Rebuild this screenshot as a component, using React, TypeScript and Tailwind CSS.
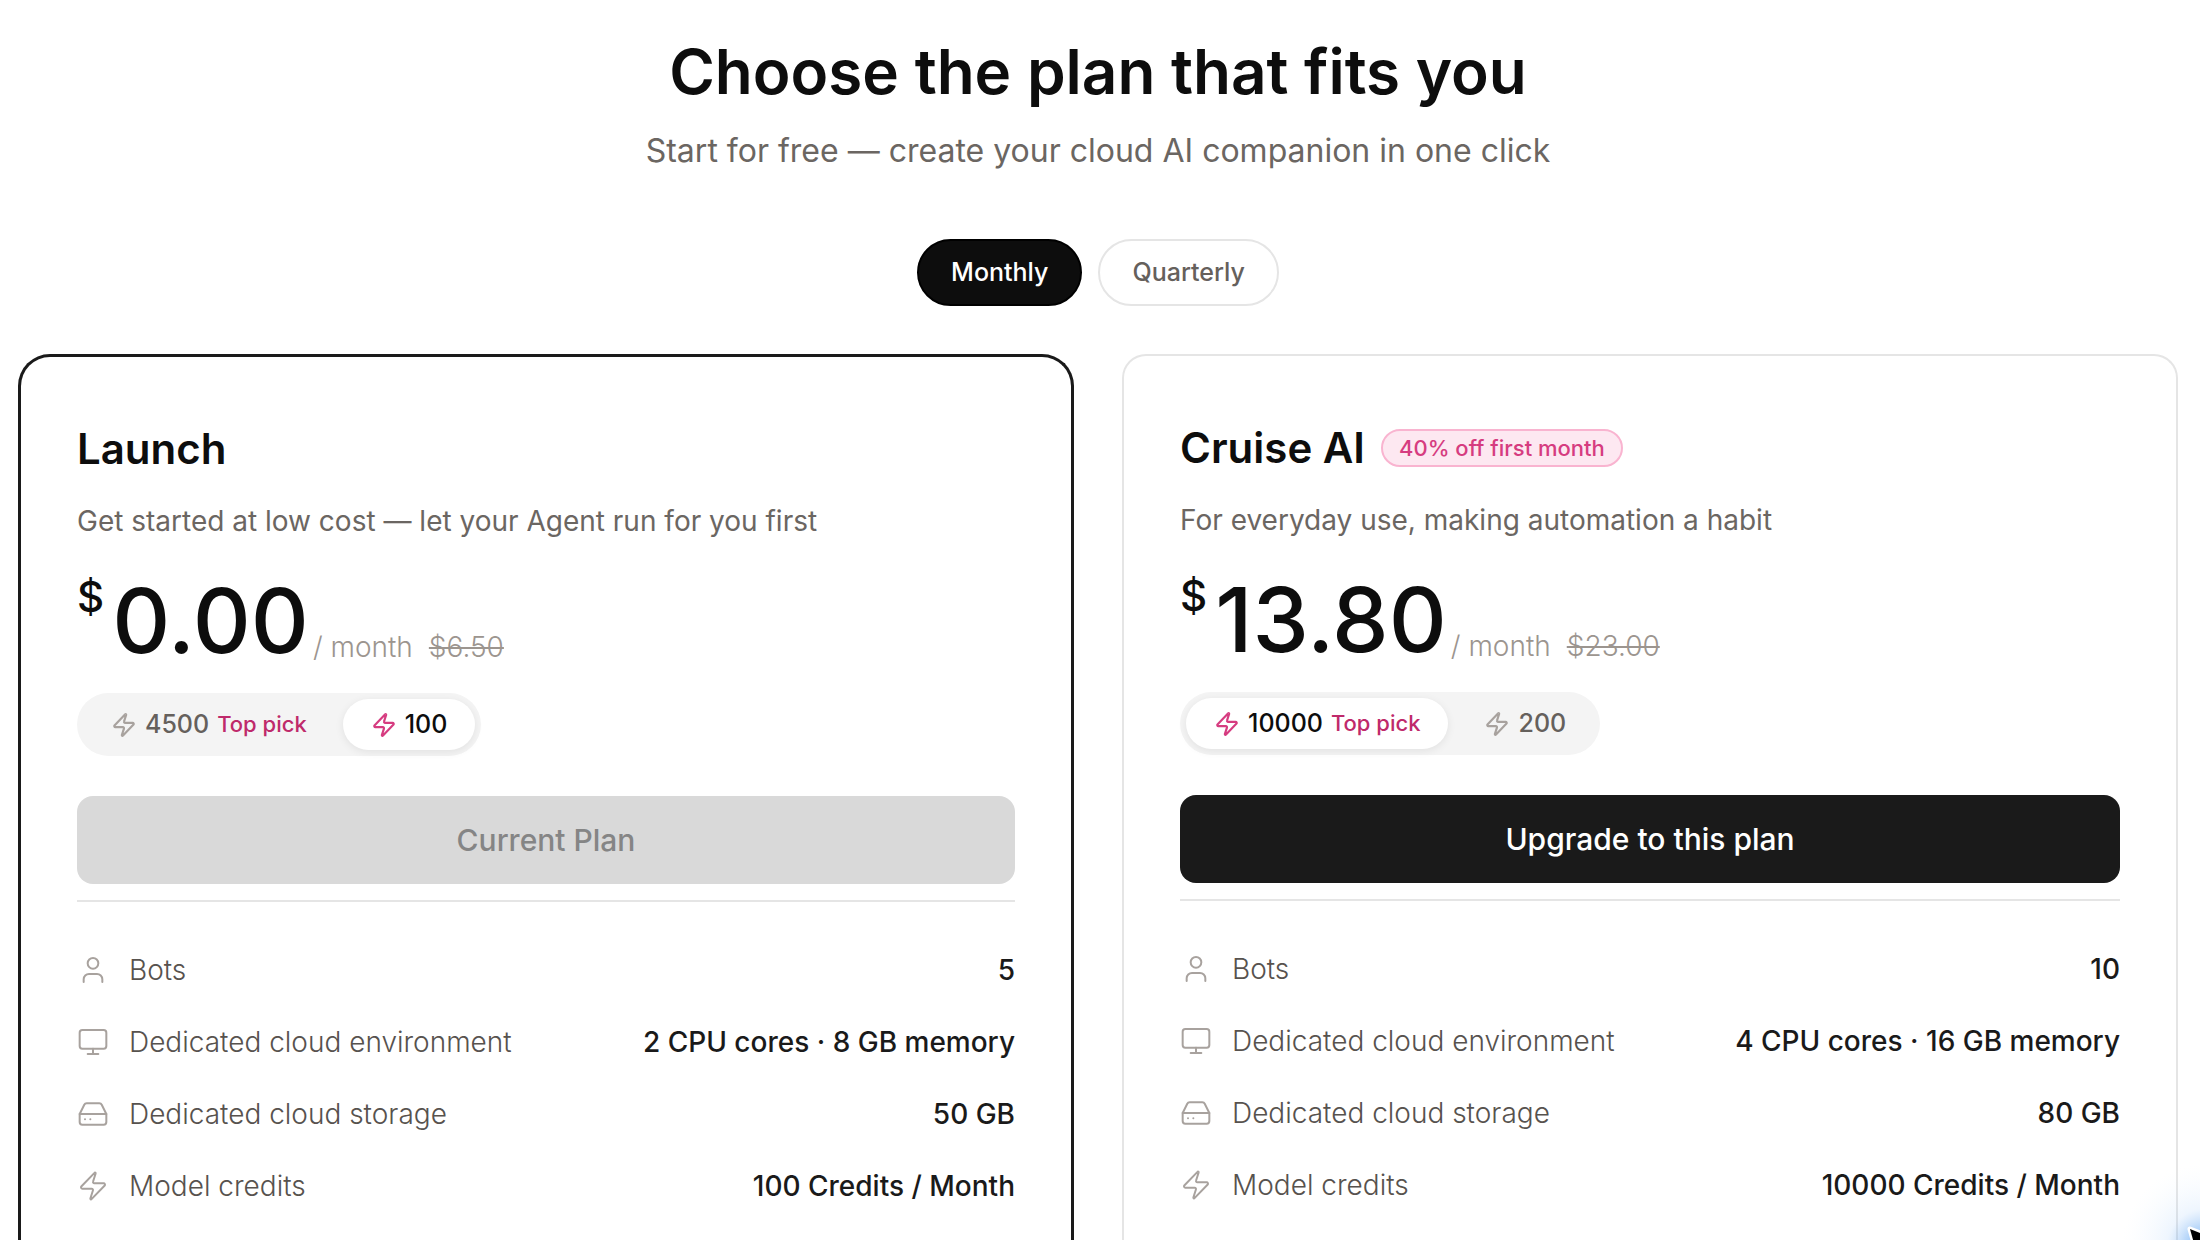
import { HardDrive, Monitor, User, Zap } from 'lucide-react';

const plans = [
  {
    name: 'Launch',
    badge: '',
    description: 'Get started at low cost — let your Agent run for you first',
    price: '0.00',
    oldPrice: '$6.50',
    current: true,
    selected: 1,
    tiers: [
      { credits: '4500', topPick: true },
      { credits: '100', topPick: false },
    ],
    features: ['5', '2 CPU cores · 8 GB memory', '50 GB', '100 Credits / Month'],
  },
  {
    name: 'Cruise AI',
    badge: '40% off first month',
    description: 'For everyday use, making automation a habit',
    price: '13.80',
    oldPrice: '$23.00',
    current: false,
    selected: 0,
    tiers: [
      { credits: '10000', topPick: true },
      { credits: '200', topPick: false },
    ],
    features: ['10', '4 CPU cores · 16 GB memory', '80 GB', '10000 Credits / Month'],
  },
];

const featureRows = [
  { label: 'Bots', icon: User },
  { label: 'Dedicated cloud environment', icon: Monitor },
  { label: 'Dedicated cloud storage', icon: HardDrive },
  { label: 'Model credits', icon: Zap },
];

type Plan = (typeof plans)[number];

const PlanCard = ({ plan }: { plan: Plan }) => (
  <section
    className={
      plan.current
        ? 'rounded-t-[32px] border-3 border-b-0 border-[#1a1a1a] bg-white px-14 pt-16'
        : 'rounded-t-3xl border-2 border-b-0 border-[#e5e5e5] bg-white px-14 pt-16'
    }
  >
    <div className="flex h-14 items-center gap-4">
      <h2 className="text-[42px] leading-14 font-semibold">{plan.name}</h2>
      {plan.badge && (
        <span className="flex h-[38px] items-center rounded-full border-2 border-[#f9b4d0] bg-[#fde8f1] px-4 text-[22px] font-medium text-[#d63c80]">
          {plan.badge}
        </span>
      )}
    </div>
    <p className="mt-6 text-[28px] leading-10 text-[#6b6662]">{plan.description}</p>

    <div className="mt-8 flex h-[96px] items-end">
      <span className="self-start text-[42px] leading-12 font-medium">$</span>
      <span className="ml-2 text-[90px] leading-[96px] font-medium">{plan.price}</span>
      <span className="ml-1 text-[28px] leading-11 font-light text-[#9c958f]">/ month</span>
      <s className="ml-4 text-[28px] leading-11 font-light text-[#9c958f]">{plan.oldPrice}</s>
    </div>

    <div className="mt-6 flex h-[63px] w-fit gap-2 rounded-full bg-[#f4f4f4] p-1.5">
      {plan.tiers.map((tier, index) => (
        <button
          key={tier.credits}
          type="button"
          aria-pressed={index === plan.selected}
          className={
            index === plan.selected
              ? 'flex items-center gap-2 rounded-full bg-white px-7 text-[25px] font-medium text-[#0d0d0d] shadow-[0_2px_8px_rgba(0,0,0,0.08)]'
              : 'flex items-center gap-2 rounded-full px-7 text-[25px] font-medium text-[#65605c]'
          }
        >
          <Zap
            size={26}
            strokeWidth={2}
            className={index === plan.selected ? 'text-[#d63c80]' : 'text-[#a8a29e]'}
          />
          {tier.credits}
          {tier.topPick && <span className="text-[22px] font-medium text-[#bf2a6b]">Top pick</span>}
        </button>
      ))}
    </div>

    <button
      type="button"
      disabled={plan.current}
      className={
        plan.current
          ? 'mt-10 h-22 w-full rounded-2xl bg-[#d9d9d9] text-[30px] font-medium text-[#858585]'
          : 'mt-10 h-22 w-full rounded-2xl bg-[#1a1a1a] text-[30px] font-medium text-white'
      }
    >
      {plan.current ? 'Current Plan' : 'Upgrade to this plan'}
    </button>

    <ul className="mt-4 flex flex-col gap-8 border-t-2 border-[#e5e5e5] pt-12">
      {featureRows.map((row, index) => (
        <li key={row.label} className="flex h-10 items-center gap-5 text-[28px] leading-10">
          <row.icon size={32} strokeWidth={1.5} className="text-[#a8a29e]" />
          <span className="font-light text-[#57524e]">{row.label}</span>
          <span className="ml-auto font-medium text-[#1a1a1a]">{plan.features[index]}</span>
        </li>
      ))}
    </ul>
  </section>
);

const App = () => {
  return (
    <main className="relative flex h-screen flex-col overflow-hidden bg-white pr-[22px] pl-[18px] font-['Inter',sans-serif] text-[#0d0d0d]">
      <header className="flex flex-col items-center pt-8 text-center">
        <h1 className="text-[62px] leading-20 font-semibold">Choose the plan that fits you</h1>
        <p className="mt-[15px] text-[32px] leading-12 text-[#6b6662]">
          Start for free — create your cloud AI companion in one click
        </p>
        <div className="mt-16 flex gap-4">
          <button
            type="button"
            aria-pressed="true"
            className="h-[67px] rounded-full border-2 border-black bg-[#0d0d0d] px-8 text-[25px] font-medium text-white"
          >
            Monthly
          </button>
          <button
            type="button"
            aria-pressed="false"
            className="h-[67px] rounded-full border-2 border-[#e5e5e5] bg-white px-8 text-[25px] font-medium text-[#65605c]"
          >
            Quarterly
          </button>
        </div>
      </header>

      <div className="mt-12 grid flex-1 grid-cols-2 gap-12">
        {plans.map((plan) => (
          <PlanCard key={plan.name} plan={plan} />
        ))}
      </div>

      {/* floating assistant pointer with its glow, half off the corner */}
      <svg className="absolute right-0 bottom-0" width="100" height="100" viewBox="0 0 100 100" aria-hidden="true">
        <defs>
          <radialGradient id="glow" gradientUnits="userSpaceOnUse" cx="104" cy="106" r="82">
            <stop offset="0" stopColor="#3b93f5" stopOpacity="0.7" />
            <stop offset="0.25" stopColor="#5aa2f2" stopOpacity="0.4" />
            <stop offset="0.45" stopColor="#8fc0f8" stopOpacity="0.15" />
            <stop offset="1" stopColor="#dbecfe" stopOpacity="0" />
          </radialGradient>
        </defs>
        <rect width="100" height="100" fill="url(#glow)" />
        <path d="M90 89 L115 99 L97 114 Z" fill="#000" stroke="#fff" strokeWidth="5" strokeLinejoin="round" paintOrder="stroke" />
      </svg>
    </main>
  );
};

export default App;
